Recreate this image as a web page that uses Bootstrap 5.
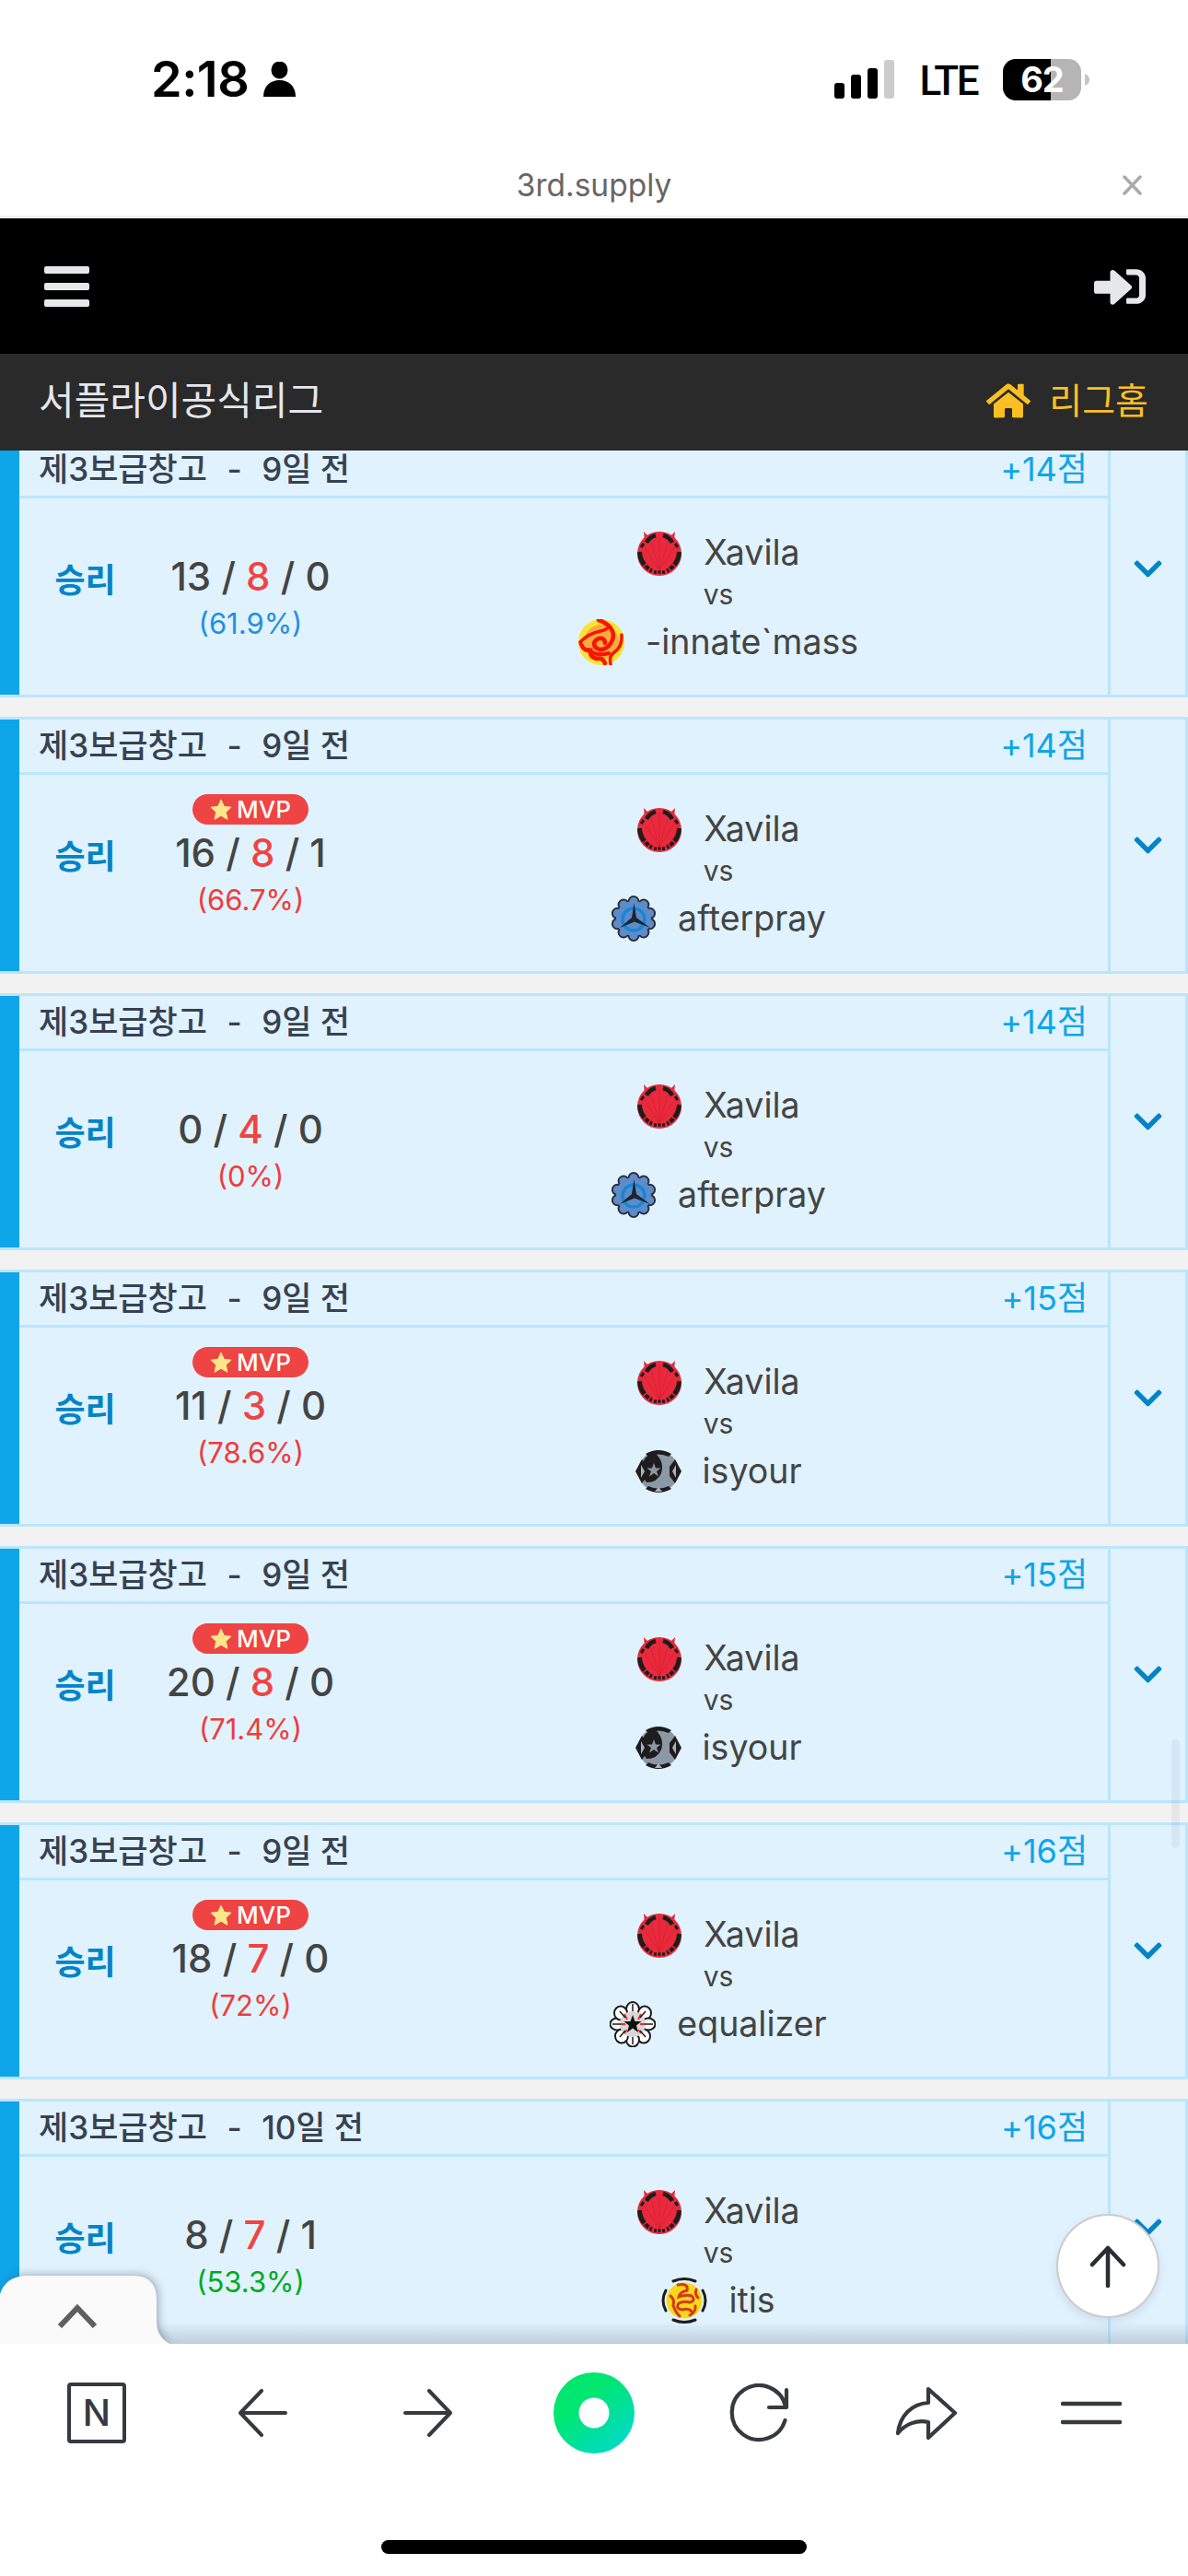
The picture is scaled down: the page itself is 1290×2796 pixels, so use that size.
<!DOCTYPE html>
<html lang="ko">
<head>
<meta charset="utf-8">
<title>서플라이공식리그</title>
<link href="https://cdn.jsdelivr.net/npm/bootstrap@5.3.0/dist/css/bootstrap.min.css" rel="stylesheet">
<style>
html,body{margin:0;width:1290px;height:2796px;overflow:hidden;background:#fff}
body{font-family:Inter,"Noto Sans CJK KR",sans-serif;color:#444}
.hg-top{height:237px;background:#fff;border-bottom:3px solid #eee;padding-top:60px}
.hg-status{height:52px;padding:0 107px 0 164px}
.hg-time{font-size:54px;font-weight:600;line-height:56px;color:#000;letter-spacing:-.5px}
.hg-lte{font-family:Roboto,sans-serif;font-size:44px;font-weight:500;line-height:58px;color:#000;letter-spacing:-2.5px;margin:4px 28px 0 26px}
.hg-batt{width:85px;height:45px;border-radius:14px;background:linear-gradient(90deg,#000 61%,#b5b5b5 61%);color:#fff;font-size:38px;font-weight:700;line-height:45px;text-align:center;letter-spacing:-1px}
.hg-title-row{height:60px;margin-top:59px}
.hg-side{flex:1 1 0}
.hg-close{margin-right:50px}
.hg-title{font-size:33.500px;color:#666;line-height:60px}
.hg-nav{height:147px;background:#000;padding:0 46px 0 48px}
.hg-sub{height:105px;background:#2a2a2a;padding:0 43px 3px 42px}
.hg-league{font-size:42px;color:#e5e7eb;line-height:60px}
.hg-home{font-size:39px;color:#fbbf24;line-height:60px;gap:20px}
.hg-view{height:2055px;background:#f2f2f2;overflow:hidden;position:relative}
.hg-list{margin-top:-11px}
.hg-card{height:279px;background:#e0f2fe;border:3px solid #bae6fd;border-left:0;margin-bottom:21px}
.hg-stripe{width:21px;background:#0ea5e9;flex:none}
.hg-main{flex:1 1 0;border-right:3px solid #bae6fd;min-width:0}
.hg-head{height:60px;border-bottom:3px solid #bae6fd;padding:0 22px 0 21px;font-size:35px;font-weight:500;color:#374151;line-height:56px}
.hg-dash{margin:0 21.500px}
.hg-pts{color:#0ea5e9;font-size:36px;font-weight:400}
.hg-body{height:213px}
.hg-res{width:143px;text-align:center;padding-top:67px;font-size:36px;font-weight:700;line-height:44px;color:#0284c7}
.hg-score{width:216px;padding-top:21px;text-align:center}
.hg-slot{height:33px}
.hg-mvp{height:33px;width:126px;border-radius:17px;background:#ef4444;color:#fff;font-size:26px;font-weight:500;line-height:33px;gap:5px}
.hg-kda{font-size:42px;font-weight:500;line-height:50px;margin-top:6px;color:#444}
.hg-red{color:#ef4444}
.hg-pct{font-size:31px;line-height:44px;margin-top:4px}
.hg-blue{color:#238fdd}.hg-rose{color:#f13a3a}.hg-green{color:#00aa22}
.hg-players{width:800px;padding-top:34px;text-align:center;font-size:37.500px;line-height:50px;color:#444}
.hg-pl{height:50px;gap:23px}
.hg-vs{height:47px;font-size:30px;line-height:41px}
.hg-toggle{width:81px;flex:none}
.hg-thumb{position:absolute;left:1272px;top:1399px;width:9px;height:118px;border-radius:5px;background:rgba(80,90,110,.07)}
.hg-fade{position:absolute;left:0;right:0;bottom:0;height:24px;background:linear-gradient(rgba(110,120,140,0),rgba(110,120,140,.3))}
.hg-tab{position:absolute;left:0;bottom:0;filter:drop-shadow(2px -1px 5px rgba(70,80,100,.45))}
.hg-up{position:absolute;left:1147px;top:1914px;width:112px;height:113px;border-radius:50%;background:#fff;border:2px solid #ccc;box-shadow:0 4px 10px rgba(60,70,90,.12)}
.hg-bar{height:252px;background:#fff;position:relative;padding:31px 0 0 15px}
.hg-tools{height:88px}
.hg-tool{width:180px;flex:none}
.hg-pill{width:462px;height:15px;border-radius:8px;background:#000;margin:94px auto 0 399px}
.hg-n{font-family:Inter,sans-serif;font-size:40px;font-weight:500;fill:#363a40}
</style>
</head>
<body>
<svg width="0" height="0" class="position-absolute">
<defs>
<symbol id="i-star" viewBox="0 0 24 24"><path d="M12 1L15.300 8.300L23 9.200L17.300 14.500L18.900 22.300L12 18.300L5.100 22.300L6.700 14.500L1 9.200L8.700 8.300Z" fill="#fde68a" stroke="#fde68a" stroke-linejoin="round"/></symbol>
<symbol id="i-chev" viewBox="0 0 448 512"><path fill="#0284c7" d="M207.029 381.476L12.686 187.132c-9.373-9.373-9.373-24.569 0-33.941l22.667-22.667c9.357-9.357 24.522-9.375 33.901-.04L224 284.505l154.745-154.021c9.379-9.335 24.544-9.317 33.901.04l22.667 22.667c9.373 9.373 9.373 24.569 0 33.941L240.971 381.476c-9.373 9.372-24.569 9.372-33.942 0z"/></symbol>
<symbol id="e-xav" viewBox="0 0 50 50">
<path d="M8 2 L9 12 L14 8Z M42 2 L41 12 L36 8Z" fill="#e5283a"/>
<circle cx="25" cy="26" r="24" fill="#e82a3c"/>
<g stroke="#d81f30" stroke-width=".8" fill="none"><path d="M25 44V8M25 44L15 10M25 44L35 10M25 44L8 18M25 44L42 18"/></g>
<g fill="none" stroke="#1f1c1c" stroke-linecap="butt">
<path d="M3.500 24Q4 33 9 38" stroke-width="5"/><path d="M46.500 24Q46 33 41 38" stroke-width="5"/>
<path d="M10 39Q13 43 17 44.500" stroke-width="4.500" stroke-dasharray="5 1.500"/><path d="M40 39Q37 43 33 44.500" stroke-width="4.500" stroke-dasharray="5 1.500"/>
<path d="M19 46H31" stroke-width="3.500" stroke-dasharray="3 1.500"/>
<path d="M11 14Q14 8 21 6" stroke-width="4.500"/><path d="M39 14Q36 8 29 6" stroke-width="4.500"/>
<path d="M5 19L8 15" stroke-width="3"/><path d="M45 19L42 15" stroke-width="3"/></g>
</symbol>
<symbol id="e-mass" viewBox="0 0 50 50">
<circle cx="25" cy="25" r="25" fill="#fbe332"/>
<circle cx="25" cy="25" r="19" fill="#f8ab3f"/>
<g fill="none" stroke="#f91407" stroke-linecap="round">
<path d="M22 1Q34 5 37 13Q40 21 33 29Q26 36 19 31Q14 25 22 21Q29 20 29 26" stroke-width="4.500"/>
<path d="M2 25Q10 16 24 13Q30 12 33 8" stroke-width="3.500"/>
<path d="M3 27Q6 35 13 34Q12 41 20 43Q26 41 29 48" stroke-width="4.500"/>
<path d="M47 17Q48 30 39 36Q33 40 35 49" stroke-width="3.500"/>
<path d="M11 33Q20 41 33 37" stroke-width="4"/>
</g>
</symbol>
<symbol id="e-aft" viewBox="0 0 50 50">
<g fill="#5d8ccb" stroke="#2c3038" stroke-width="2"><circle cx="25" cy="6.500" r="5.500"/><circle cx="35.900" cy="10" r="5.500"/><circle cx="42.600" cy="19.300" r="5.500"/><circle cx="42.600" cy="30.700" r="5.500"/><circle cx="35.900" cy="40" r="5.500"/><circle cx="25" cy="43.500" r="5.500"/><circle cx="14.100" cy="40" r="5.500"/><circle cx="7.400" cy="30.700" r="5.500"/><circle cx="7.400" cy="19.300" r="5.500"/><circle cx="14.100" cy="10" r="5.500"/></g>
<circle cx="25" cy="25" r="19" fill="#5d8ccb"/>
<circle cx="25" cy="26" r="12" fill="none" stroke="#1787d4" stroke-width="3.500"/>
<path d="M25.500 8L28 24L43 35L26 28.500L10 35L23 24Z" fill="#1d2530"/>
</symbol>
<symbol id="e-isy" viewBox="0 0 50 50">
<circle cx="25" cy="25" r="22" fill="#8b98a6"/>
<path d="M11 6Q25-2 39 6L36 9Q25 4 14 9Z M11 44Q25 52 39 44L36 41Q25 46 14 41Z" fill="#1f1c1d"/>
<path d="M0 25L7 12L13 20L13 30L7 38Z M50 25L43 12L37 20L37 30L43 38Z" fill="#1f1c1d"/>
<path d="M20 4Q32 14 28 27Q24 37 12 37Q5 28 7 18Q10 8 20 4Z" fill="#1f1c1d"/>
<path d="M20 16L22 21.500L27.500 21.500L23 25L25 30.500L20 27L15 30.500L17 25L12.500 21.500L18 21.500Z" fill="#8b98a6"/>
<path d="M25 42L29 47H21Z M6 18L10 25L6 32Z M44 18L40 25L44 32Z" fill="#a9b4bf"/>
</symbol>
<symbol id="e-equ" viewBox="0 0 50 50">
<g fill="#fff" stroke="#1c1c1c" stroke-width="2"><ellipse cx="25" cy="9" rx="7" ry="8"/><ellipse cx="38" cy="13" rx="7" ry="7.500"/><ellipse cx="42" cy="25" rx="7.500" ry="6.500"/><ellipse cx="37" cy="38" rx="7" ry="7.500"/><ellipse cx="25" cy="42" rx="7" ry="7.500"/><ellipse cx="13" cy="38" rx="7" ry="7.500"/><ellipse cx="8" cy="25" rx="7.500" ry="6.500"/><ellipse cx="12" cy="13" rx="7" ry="7.500"/></g>
<circle cx="25" cy="25" r="14" fill="#d7d7d9"/>
<g stroke="#ee2a2a" stroke-width="1.800"><path d="M16 14L19 20M34 14L31 20M38 25H33M34 35L31 31M16 35L19 31M12 25H17"/></g>
<g stroke="#1c1c1c" stroke-width="1.500"><path d="M25 3V11M39 11L33 18M47 25H38M39 39L33 32M25 47V39M11 39L17 32M3 25H12M11 11L17 18"/></g>
<path d="M25 15L27.500 22L34.500 22L29 26.500L31 34L25 29.500L19 34L21 26.500L15.500 22L22.500 22Z" fill="#111"/>
</symbol>
<symbol id="e-iti" viewBox="0 0 50 50">
<circle cx="25" cy="25" r="19.500" fill="#f8d81b"/>
<g fill="none" stroke="#d43a1a" stroke-width="3" stroke-linecap="round"><path d="M18 8Q30 6 28 14Q20 16 19 21Q27 18 33 20Q38 25 31 27Q24 25 19 28Q15 34 23 35Q30 33 33 37"/><path d="M10 20Q15 24 13 30Q15 37 20 42"/><path d="M38 13Q36 18 40 22"/><path d="M37 31Q38 37 31 41"/></g>
<g fill="none" stroke="#1f1c1d" stroke-width="3" stroke-linecap="round"><path d="M13 4Q25-1 37 4"/><path d="M13 46Q25 51 37 46"/><path d="M5 14Q-1 25 5 36"/><path d="M45 14Q51 25 45 36"/></g>
</symbol>
</defs>
</svg>

<div class="hg-top">
  <div class="hg-status d-flex align-items-center">
    <span class="hg-time">2:18</span>
    <svg class="ms-3" width="35" height="38" viewBox="0 0 35 38"><ellipse cx="17.500" cy="9" rx="9" ry="9.500" fill="#000"/><path d="M0 38C0 26 8 20 17.500 20S35 26 35 38Z" fill="#000"/></svg>
    <span class="flex-grow-1"></span>
    <svg width="66" height="42" viewBox="0 0 66 42"><rect x="0" y="25" width="11" height="17" rx="3" fill="#000"/><rect x="18" y="16" width="11" height="26" rx="3" fill="#000"/><rect x="36" y="9" width="11" height="33" rx="3" fill="#000"/><rect x="54" y="0" width="11" height="42" rx="3" fill="#ccc"/></svg>
    <span class="hg-lte">LTE</span>
    <span class="hg-batt">62</span>
    <svg class="ms-1" width="5" height="13" viewBox="0 0 5 13"><path d="M0 0Q5 2 5 6.500T0 13Z" fill="#c4c4c4"/></svg>
  </div>
  <div class="hg-title-row d-flex align-items-center">
    <span class="hg-side"></span>
    <span class="hg-title">3rd.supply</span>
    <span class="hg-side d-flex justify-content-end"><svg class="hg-close flex-none" width="21" height="22" viewBox="0 0 21 22"><path d="M2 2L19 20M19 2L2 20" stroke="#aaa" stroke-width="3.500" stroke-linecap="round"/></svg></span>
  </div>
</div>

<nav class="hg-nav d-flex justify-content-between align-items-center">
  <svg width="49" height="44" viewBox="0 0 49 44"><rect y="0" width="49" height="8" rx="2" fill="#e5e7eb"/><rect y="18" width="49" height="8" rx="2" fill="#e5e7eb"/><rect y="36" width="49" height="8" rx="2" fill="#e5e7eb"/></svg>
  <svg width="56" height="44" viewBox="0 0 512 448" preserveAspectRatio="none"><path transform="translate(0 -32)" fill="#e5e7eb" d="M416 448h-84c-6.600 0-12-5.400-12-12v-40c0-6.600 5.400-12 12-12h84c17.700 0 32-14.300 32-32V160c0-17.700-14.300-32-32-32h-84c-6.600 0-12-5.400-12-12V76c0-6.600 5.400-12 12-12h84c53 0 96 43 96 96v192c0 53-43 96-96 96zm-47-201L201 79c-15-15-41-4.500-41 17v96H24c-13.300 0-24 10.700-24 24v96c0 13.300 10.700 24 24 24h136v96c0 21.500 26 32 41 17l168-168c9.300-9.400 9.300-24.600 0-34z"/></svg>
</nav>

<div class="hg-sub d-flex justify-content-between align-items-center">
  <span class="hg-league">서플라이공식리그</span>
  <span class="hg-home d-flex align-items-center"><svg width="48" height="42" viewBox="0 0 576 512" preserveAspectRatio="none"><path fill="#fbbf24" d="M280.370 148.260L96 300.110V464a16 16 0 0 0 16 16l112.060-.29a16 16 0 0 0 15.920-16V368a16 16 0 0 1 16-16h64a16 16 0 0 1 16 16v95.640a16 16 0 0 0 16 16.050L464 480a16 16 0 0 0 16-16V300L295.670 148.260a12.190 12.190 0 0 0-15.300 0zM571.600 251.470L488 182.560V44.050a12 12 0 0 0-12-12h-56a12 12 0 0 0-12 12v72.610L318.470 43a48 48 0 0 0-61 0L4.340 251.470a12 12 0 0 0-1.600 16.900l25.500 31A12 12 0 0 0 45.150 301l235.220-193.740a12.190 12.190 0 0 1 15.300 0L530.900 301a12 12 0 0 0 16.900-1.600l25.500-31a12 12 0 0 0-1.700-16.930z"/></svg>리그홈</span>
</div>

<div class="hg-view">
  <div class="hg-list">

    <article class="hg-card d-flex">
      <div class="hg-stripe"></div>
      <div class="hg-main">
        <div class="hg-head d-flex justify-content-between"><span>제3보급창고<span class="hg-dash">-</span>9일 전</span><span class="hg-pts">+14점</span></div>
        <div class="hg-body d-flex">
          <div class="hg-res">승리</div>
          <div class="hg-score"><div class="hg-slot"></div><div class="hg-kda">13 / <span class="hg-red">8</span> / 0</div><div class="hg-pct hg-blue">(61.9%)</div></div>
          <div class="hg-players">
            <div class="hg-pl d-flex justify-content-center align-items-center"><svg width="50" height="50"><use href="#e-xav"/></svg><span>Xavila</span></div>
            <div class="hg-vs">vs</div>
            <div class="hg-pl d-flex justify-content-center align-items-center"><svg width="50" height="50"><use href="#e-mass"/></svg><span>-innate`mass</span></div>
          </div>
        </div>
      </div>
      <div class="hg-toggle d-flex justify-content-center align-items-center"><svg width="31" height="35"><use href="#i-chev"/></svg></div>
    </article>

    <article class="hg-card d-flex">
      <div class="hg-stripe"></div>
      <div class="hg-main">
        <div class="hg-head d-flex justify-content-between"><span>제3보급창고<span class="hg-dash">-</span>9일 전</span><span class="hg-pts">+14점</span></div>
        <div class="hg-body d-flex">
          <div class="hg-res">승리</div>
          <div class="hg-score"><div class="hg-slot d-flex justify-content-center"><span class="hg-mvp d-inline-flex justify-content-center align-items-center"><svg width="24" height="24"><use href="#i-star"/></svg>MVP</span></div><div class="hg-kda">16 / <span class="hg-red">8</span> / 1</div><div class="hg-pct hg-rose">(66.7%)</div></div>
          <div class="hg-players">
            <div class="hg-pl d-flex justify-content-center align-items-center"><svg width="50" height="50"><use href="#e-xav"/></svg><span>Xavila</span></div>
            <div class="hg-vs">vs</div>
            <div class="hg-pl d-flex justify-content-center align-items-center"><svg width="50" height="50"><use href="#e-aft"/></svg><span>afterpray</span></div>
          </div>
        </div>
      </div>
      <div class="hg-toggle d-flex justify-content-center align-items-center"><svg width="31" height="35"><use href="#i-chev"/></svg></div>
    </article>

    <article class="hg-card d-flex">
      <div class="hg-stripe"></div>
      <div class="hg-main">
        <div class="hg-head d-flex justify-content-between"><span>제3보급창고<span class="hg-dash">-</span>9일 전</span><span class="hg-pts">+14점</span></div>
        <div class="hg-body d-flex">
          <div class="hg-res">승리</div>
          <div class="hg-score"><div class="hg-slot"></div><div class="hg-kda">0 / <span class="hg-red">4</span> / 0</div><div class="hg-pct hg-rose">(0%)</div></div>
          <div class="hg-players">
            <div class="hg-pl d-flex justify-content-center align-items-center"><svg width="50" height="50"><use href="#e-xav"/></svg><span>Xavila</span></div>
            <div class="hg-vs">vs</div>
            <div class="hg-pl d-flex justify-content-center align-items-center"><svg width="50" height="50"><use href="#e-aft"/></svg><span>afterpray</span></div>
          </div>
        </div>
      </div>
      <div class="hg-toggle d-flex justify-content-center align-items-center"><svg width="31" height="35"><use href="#i-chev"/></svg></div>
    </article>

    <article class="hg-card d-flex">
      <div class="hg-stripe"></div>
      <div class="hg-main">
        <div class="hg-head d-flex justify-content-between"><span>제3보급창고<span class="hg-dash">-</span>9일 전</span><span class="hg-pts">+15점</span></div>
        <div class="hg-body d-flex">
          <div class="hg-res">승리</div>
          <div class="hg-score"><div class="hg-slot d-flex justify-content-center"><span class="hg-mvp d-inline-flex justify-content-center align-items-center"><svg width="24" height="24"><use href="#i-star"/></svg>MVP</span></div><div class="hg-kda">11 / <span class="hg-red">3</span> / 0</div><div class="hg-pct hg-rose">(78.6%)</div></div>
          <div class="hg-players">
            <div class="hg-pl d-flex justify-content-center align-items-center"><svg width="50" height="50"><use href="#e-xav"/></svg><span>Xavila</span></div>
            <div class="hg-vs">vs</div>
            <div class="hg-pl d-flex justify-content-center align-items-center"><svg width="50" height="50"><use href="#e-isy"/></svg><span>isyour</span></div>
          </div>
        </div>
      </div>
      <div class="hg-toggle d-flex justify-content-center align-items-center"><svg width="31" height="35"><use href="#i-chev"/></svg></div>
    </article>

    <article class="hg-card d-flex">
      <div class="hg-stripe"></div>
      <div class="hg-main">
        <div class="hg-head d-flex justify-content-between"><span>제3보급창고<span class="hg-dash">-</span>9일 전</span><span class="hg-pts">+15점</span></div>
        <div class="hg-body d-flex">
          <div class="hg-res">승리</div>
          <div class="hg-score"><div class="hg-slot d-flex justify-content-center"><span class="hg-mvp d-inline-flex justify-content-center align-items-center"><svg width="24" height="24"><use href="#i-star"/></svg>MVP</span></div><div class="hg-kda">20 / <span class="hg-red">8</span> / 0</div><div class="hg-pct hg-rose">(71.4%)</div></div>
          <div class="hg-players">
            <div class="hg-pl d-flex justify-content-center align-items-center"><svg width="50" height="50"><use href="#e-xav"/></svg><span>Xavila</span></div>
            <div class="hg-vs">vs</div>
            <div class="hg-pl d-flex justify-content-center align-items-center"><svg width="50" height="50"><use href="#e-isy"/></svg><span>isyour</span></div>
          </div>
        </div>
      </div>
      <div class="hg-toggle d-flex justify-content-center align-items-center"><svg width="31" height="35"><use href="#i-chev"/></svg></div>
    </article>

    <article class="hg-card d-flex">
      <div class="hg-stripe"></div>
      <div class="hg-main">
        <div class="hg-head d-flex justify-content-between"><span>제3보급창고<span class="hg-dash">-</span>9일 전</span><span class="hg-pts">+16점</span></div>
        <div class="hg-body d-flex">
          <div class="hg-res">승리</div>
          <div class="hg-score"><div class="hg-slot d-flex justify-content-center"><span class="hg-mvp d-inline-flex justify-content-center align-items-center"><svg width="24" height="24"><use href="#i-star"/></svg>MVP</span></div><div class="hg-kda">18 / <span class="hg-red">7</span> / 0</div><div class="hg-pct hg-rose">(72%)</div></div>
          <div class="hg-players">
            <div class="hg-pl d-flex justify-content-center align-items-center"><svg width="50" height="50"><use href="#e-xav"/></svg><span>Xavila</span></div>
            <div class="hg-vs">vs</div>
            <div class="hg-pl d-flex justify-content-center align-items-center"><svg width="50" height="50"><use href="#e-equ"/></svg><span>equalizer</span></div>
          </div>
        </div>
      </div>
      <div class="hg-toggle d-flex justify-content-center align-items-center"><svg width="31" height="35"><use href="#i-chev"/></svg></div>
    </article>

    <article class="hg-card d-flex">
      <div class="hg-stripe"></div>
      <div class="hg-main">
        <div class="hg-head d-flex justify-content-between"><span>제3보급창고<span class="hg-dash">-</span>10일 전</span><span class="hg-pts">+16점</span></div>
        <div class="hg-body d-flex">
          <div class="hg-res">승리</div>
          <div class="hg-score"><div class="hg-slot"></div><div class="hg-kda">8 / <span class="hg-red">7</span> / 1</div><div class="hg-pct hg-green">(53.3%)</div></div>
          <div class="hg-players">
            <div class="hg-pl d-flex justify-content-center align-items-center"><svg width="50" height="50"><use href="#e-xav"/></svg><span>Xavila</span></div>
            <div class="hg-vs">vs</div>
            <div class="hg-pl d-flex justify-content-center align-items-center"><svg width="50" height="50"><use href="#e-iti"/></svg><span>itis</span></div>
          </div>
        </div>
      </div>
      <div class="hg-toggle d-flex justify-content-center align-items-center"><svg width="31" height="35"><use href="#i-chev"/></svg></div>
    </article>
  </div>

  <div class="hg-thumb"></div>
  <div class="hg-fade"></div>
  <svg class="hg-tab" width="186" height="74" viewBox="0 0 186 74"><path d="M0 20Q6 1 28 0H146Q170 1 170 26V50Q170 66 184 74H0Z" fill="#fafafa"/><path d="M65 55L84 35L103 55" fill="none" stroke="#5f5f5f" stroke-width="6" stroke-linejoin="miter"/></svg>
  <div class="hg-up d-flex justify-content-center align-items-center"><svg width="40" height="46" viewBox="0 0 40 46"><path d="M20 44V3M3 21L20 3L37 21" fill="none" stroke="#2a2d34" stroke-width="4.500" stroke-linecap="round" stroke-linejoin="round"/></svg></div>
</div>

<div class="hg-bar">
  <div class="hg-tools d-flex align-items-center">
    <div class="hg-tool d-flex justify-content-center"><svg width="64" height="66" viewBox="0 0 64 66"><rect x="2" y="2" width="60" height="62" rx="2" fill="none" stroke="#363a40" stroke-width="4"/><text class="hg-n" x="32" y="47" text-anchor="middle">N</text></svg></div>
    <div class="hg-tool d-flex justify-content-center"><svg width="54" height="52" viewBox="0 0 54 52"><path d="M52 26H3M26 2L3 26L26 50" fill="none" stroke="#363a40" stroke-width="4" stroke-linecap="round" stroke-linejoin="round"/></svg></div>
    <div class="hg-tool d-flex justify-content-center"><svg width="54" height="52" viewBox="0 0 54 52"><path d="M2 26H51M28 2L51 26L28 50" fill="none" stroke="#363a40" stroke-width="4" stroke-linecap="round" stroke-linejoin="round"/></svg></div>
    <div class="hg-tool d-flex justify-content-center"><svg width="88" height="88" viewBox="0 0 88 88"><defs><linearGradient id="hg-gr" x1=".2" y1=".1" x2=".9" y2=".95"><stop offset=".25" stop-color="#00e66e"/><stop offset="1" stop-color="#00d9cf"/></linearGradient></defs><circle cx="44" cy="44" r="44" fill="url(#hg-gr)"/><circle cx="44" cy="44" r="16.500" fill="#fff"/></svg></div>
    <div class="hg-tool d-flex justify-content-center"><svg width="68" height="64" viewBox="0 0 68 64"><path d="M63 7V26H44M62 25A29.500 29.500 0 1 0 61.500 40" fill="none" stroke="#363a40" stroke-width="4.200" stroke-linecap="round" stroke-linejoin="round"/></svg></div>
    <div class="hg-tool d-flex justify-content-center"><svg width="70" height="60" viewBox="0 0 70 60"><path d="M38 4L67 30L38 57V40C26 37 13 42 5 52C7 33 20 20 38 19Z" fill="none" stroke="#363a40" stroke-width="4.200" stroke-linejoin="round"/></svg></div>
    <div class="hg-tool d-flex justify-content-center"><svg width="66" height="26" viewBox="0 0 66 26"><path d="M2 3H64M2 23H64" fill="none" stroke="#363a40" stroke-width="4.500" stroke-linecap="round"/></svg></div>
  </div>
  <div class="hg-pill"></div>
</div>
<script src="https://cdn.jsdelivr.net/npm/bootstrap@5.3.0/dist/js/bootstrap.bundle.min.js"></script>
</body>
</html>
